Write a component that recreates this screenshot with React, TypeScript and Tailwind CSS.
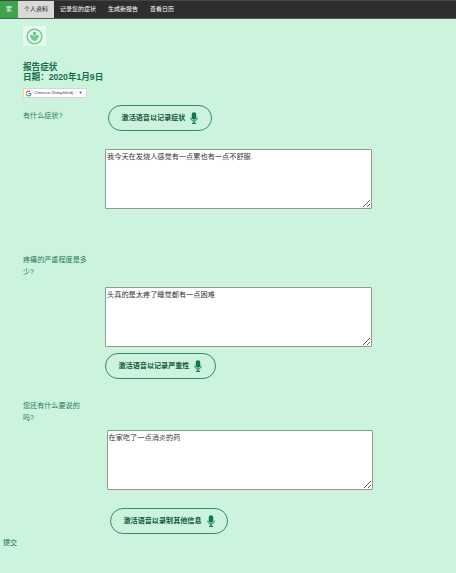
import React from 'react';

const cjk = { fontFamily: '"Liberation Sans", "Noto Sans CJK SC", sans-serif' };

const MicIcon = () => (
    <svg viewBox="0 0 10 16" className="w-[8px] h-[12px] shrink-0 ml-[5px]">
        <rect x="2" y="0.3" width="6" height="10" rx="3" fill="#0f7a50" />
        <path d="M0.8 7.5 C0.8 10.8 2.5 12 5 12 C7.5 12 9.2 10.8 9.2 7.5" fill="none" stroke="#0f7a50" strokeWidth="1.3" />
        <path d="M5 12 V14.8 M2.4 15.2 H7.600" fill="none" stroke="#0f7a50" strokeWidth="1.5" />
    </svg>
);

const VoiceButton = ({ label, className }: { label: string; className: string }) => (
    <button className={`flex items-center justify-center h-[26px] rounded-full border border-[#3a8a68] text-[7.1px] font-bold text-[#14593c] ${className}`}>
        {label}
        <MicIcon />
    </button>
);

const Field = ({ value, className }: { value: string; className: string }) => (
    <textarea
        readOnly
        defaultValue={value}
        className={`block h-[60px] bg-white border border-[#8f9a94] rounded-[1px] px-[1px] py-[2px] text-[7.2px] leading-[10px] text-[#333333] ${className}`}
    />
);

const App: React.FC = () => {
    return (
        <div style={cjk} className="w-[456px] h-[573px] overflow-hidden bg-[#ccf3dc]">
            <nav className="flex h-[19px] bg-[#2e2e2e] border-t border-t-[#444444] border-b border-b-[#55605a] text-[6px] text-white">
                <a className="flex items-center justify-center w-[18px] bg-[#3fa34d]">家</a>
                <a className="flex items-center justify-center w-[36px] bg-[#d9d9d9] text-[#222222]">个人资料</a>
                <a className="flex items-center ml-[6px]">记录您的症状</a>
                <a className="flex items-center ml-[12px]">生成新报告</a>
                <a className="flex items-center ml-[12px]">查看日历</a>
            </nav>

            <div className="ml-[23px] mt-[7px] flex items-center justify-center w-[23px] h-[20px] bg-[#e6f9ee]">
                <svg viewBox="0 0 20 20" className="w-[17px] h-[17px]">
                    <circle cx="10" cy="10" r="8.6" fill="none" stroke="#6cc98f" strokeWidth="1.7" />
                    <path d="M4.6 8 C7.2 8 9 8.8 10 10.6 C11 8.8 12.8 8 15.4 8 C15 12 13 14.6 10 15.2 C7 14.6 5 12 4.6 8 Z" fill="#6cc98f" />
                    <path d="M8.2 4.6 H11.8 V8 L10 9.6 L8.2 8 Z" fill="#6cc98f" />
                </svg>
            </div>

            <h1 className="ml-[23px] mt-[16px] text-[8.6px] leading-[10px] font-bold text-[#17704a]">
                报告症状
                <br />
                日期：2020年1月9日
            </h1>

            <div className="ml-[23px] mt-[6px] flex items-center w-[64px] h-[10px] bg-white border border-[#d5d5d5] text-[4.4px] text-[#444444]">
                <svg viewBox="0 0 24 24" className="w-[7px] h-[7px] ml-[1px] mr-[2px] shrink-0">
                    <path d="M22 12.2c0-.7-.1-1.4-.2-2H12v3.9h5.6a4.8 4.8 0 0 1-2.1 3.1v2.6h3.4c2-1.8 3.1-4.5 3.1-7.6z" fill="#4285f4" />
                    <path d="M12 22c2.8 0 5.2-.9 6.9-2.5l-3.4-2.6c-.9.6-2.1 1-3.5 1-2.7 0-5-1.800-5.800-4.300H3.200v2.700A10 10 0 0 0 12 22z" fill="#34a853" />
                    <path d="M6.200 13.600a6 6 0 0 1 0-3.800V7.100H3.200a10 10 0 0 0 0 9.200z" fill="#fbbc05" />
                    <path d="M12 5.900c1.500 0 2.900.5 4 1.500l3-3A10 10 0 0 0 3.200 7.100l3 2.700C7 7.700 9.300 5.900 12 5.900z" fill="#ea4335" />
                </svg>
                Chinese (Simplified)
                <span className="ml-[2px] text-[#bbbbbb]">|</span>
                <span className="ml-[2px] text-[4px]">▼</span>
            </div>

            <div className="flex mt-[7px]">
                <p className="ml-[23px] w-[85px] mt-[6px] text-[7.1px] leading-[11px] text-[#2a7d5a]">有什么症状?</p>
                <VoiceButton label="激活语音以记录症状" className="w-[104px]" />
            </div>
            <Field className="ml-[105px] mt-[18px] w-[267px]" value="我今天在发烧人感觉有一点累也有一点不舒服." />

            <p className="ml-[23px] mt-[46px] w-[68px] text-[7.1px] leading-[11.500px] text-[#2a7d5a]">疼痛的严重程度是多少?</p>
            <Field className="ml-[105px] mt-[9px] w-[267px]" value="头真的是太疼了睡觉都有一点困难" />
            <VoiceButton label="激活语音以记录严重性" className="ml-[105px] mt-[6px] w-[111px]" />

            <p className="ml-[23px] mt-[22px] w-[60px] text-[7.1px] leading-[11.500px] text-[#2a7d5a]">您还有什么要说的吗?</p>
            <Field className="ml-[106.5px] mt-[6px] w-[266px]" value="在家吃了一点消炎的药" />
            <VoiceButton label="激活语音以录制其他信息" className="ml-[110px] mt-[18px] w-[118px]" />

            <p className="ml-[3px] mt-[4px] text-[7.1px] leading-[10px] text-[#17704a]">提交</p>
        </div>
    );
};

export default App;
